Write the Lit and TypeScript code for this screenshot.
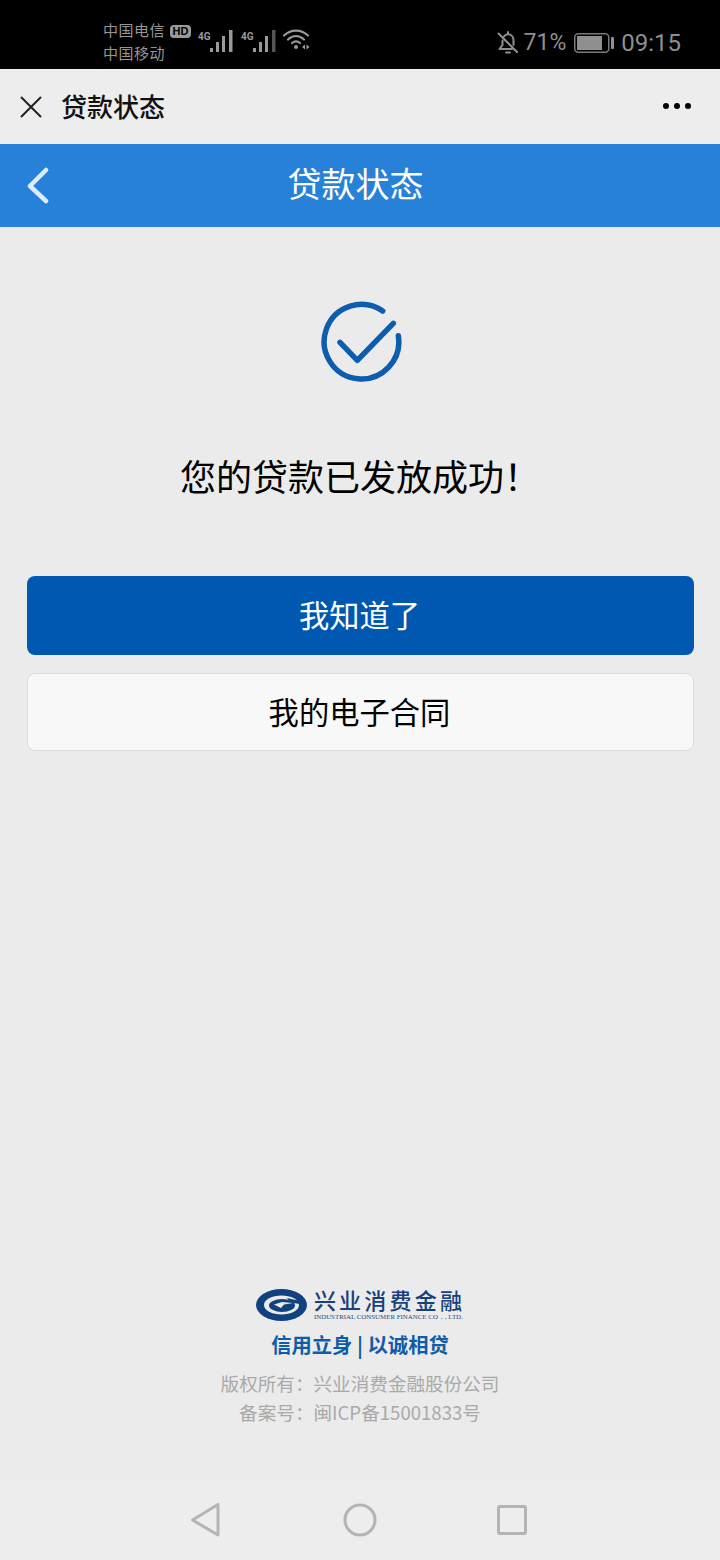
import { LitElement, html, css } from "lit";
import { customElement } from "lit/decorators.js";

const bars = (last: string) => html`<svg width="24" height="24" viewBox="0 0 24 24">
  <rect x="0" y="19" width="3" height="4" fill="#9a9a9a"/>
  <rect x="6" y="13" width="3" height="10" fill="#9a9a9a"/>
  <rect x="12" y="7" width="3" height="16" fill="#9a9a9a"/>
  <rect x="19" y="1" width="3.500" height="22" fill="${last}"/>
</svg>`;

@customElement("app-root")
export class AppRoot extends LitElement {
  static styles = css`
    :host { display: block; width: 720px; height: 1560px; font-family: "Liberation Sans", "Noto Sans CJK SC", sans-serif; }
    .page { height: 1560px; display: flex; flex-direction: column; background: #ebebeb; }
    .status { height: 69px; flex: none; background: #000; color: #969696; display: flex; align-items: center; padding: 12px 39px 0 103px; box-sizing: border-box; }
    .carrier { display: flex; flex-direction: column; font-size: 15px; line-height: 23px; width: 67px; padding-top: 1px; font-family: "Noto Sans CJK SC", sans-serif; letter-spacing: 0.5px; }
    .hd { width: 21px; height: 13px; border-radius: 4px; background: #9a9a9a; color: #000; font: bold 11px/13px "Liberation Sans", sans-serif; text-align: center; margin: -18px 7px 0 0; }
    .net { display: flex; align-items: flex-end; height: 26px; margin-right: 7px; margin-top: -2px; }
    .net b { font: bold 10px/10px "Roboto", sans-serif; color: #9a9a9a; align-self: flex-start; margin: 5px 1px 0 0; width: 11px; }
    .wifi { margin-left: -2px; margin-top: -2px; }
    .spacer { flex: 1; }
    .right { display: flex; align-items: center; font: 24px/28px "Roboto", sans-serif; color: #8f8f8f; margin-top: 4px; }
    .pct { margin: 0 8px 0 5px; font-size: 23px; }
    .batt { margin-right: 7px; }

    .nav { height: 75px; flex: none; background: #ededed; display: flex; align-items: center; padding: 0 29px 0 20px; box-sizing: border-box; }
    .nav .t { margin-left: 19px; font: 500 26px/30px "Noto Sans CJK SC", sans-serif; color: #111; flex: 1; padding-bottom: 2px; }
    .dots { display: flex; gap: 5px; padding-bottom: 1px; }
    .dots i { width: 6px; height: 6px; border-radius: 50%; background: #000; }

    .head { height: 83px; flex: none; background: #2781d8; position: relative; display: flex; align-items: center; justify-content: center; color: #fff; font: 34px/40px "Noto Sans CJK SC", sans-serif; padding: 0 9px 6px 0; box-sizing: border-box; }
    .back { position: absolute; left: 26px; top: 23px; }

    .main { flex: 1; display: flex; flex-direction: column; align-items: center; }
    .ok { margin: 73px 0 0 2px; }
    .msg { margin-top: 68px; font: 36px/50px "Noto Sans CJK SC", sans-serif; color: #000; }
    .btns { margin-top: 76px; align-self: stretch; padding: 0 26px 0 27px; display: flex; flex-direction: column; gap: 18px; }
    .btn { border-radius: 8px; display: flex; align-items: center; justify-content: center; font: 30.300px/40px "Noto Sans CJK SC", sans-serif; box-sizing: border-box; padding: 0 2px 3px 0; }
    .primary { background: #0058b0; color: #fff; height: 79px; }
    .second { background: #f8f8f8; color: #000; border: 1px solid #dcdcdc; height: 78px; }

    .spring { flex: 1; }
    .foot { display: flex; flex-direction: column; align-items: center; padding-bottom: 54px; }
    .logo { display: flex; align-items: center; gap: 7px; margin-left: 1px; }
    .lt { display: flex; flex-direction: column; gap: 3px; }
    .cn { font: 500 22px/22px "Noto Sans CJK SC", sans-serif; letter-spacing: 3.200px; color: #16407f; white-space: nowrap; }
    .en { font: 6.900px/8px "Liberation Serif", serif; color: #2a4a80; white-space: nowrap; }
    .slogan { margin-top: 8px; font: 700 20.300px/30px "Noto Sans CJK SC", sans-serif; color: #0f5ca8; }
    .copy { margin-top: 9px; font: 18.600px/29px "Noto Sans CJK SC", sans-serif; color: #a9a9a9; }
    .copy.two { margin-top: 0; }

    .sys { height: 80px; flex: none; background: #ededed; display: flex; align-items: center; padding-left: 190px; gap: 121px; }
    .sys svg:last-child { margin-left: -1px; }
  `;

  render() {
    return html`<div class="page">
      <div class="status">
        <div class="carrier"><span>中国电信</span><span>中国移动</span></div>
        <div class="hd">HD</div>
        <div class="net"><b>4G</b>${bars("#9a9a9a")}</div>
        <div class="net"><b>4G</b>${bars("#555")}</div>
        <svg class="wifi" width="30" height="24" viewBox="0 0 30 24" fill="none" stroke="#9a9a9a" stroke-width="2.200" stroke-linecap="round">
          <path d="M2 7.500C9 1 19 1 26 7.500"/>
          <path d="M6 11.500C11 7 17 7 22 11.500"/>
          <path d="M10 15C12.500 13 15.500 13 18 15"/>
          <circle cx="14" cy="19" r="2" fill="#9a9a9a" stroke="none"/>
          <path d="M20 19l3-2.500v5zM24.500 16.500v5l3-2.500z" fill="#9a9a9a" stroke="none"/>
        </svg>
        <div class="spacer"></div>
        <div class="right">
          <svg width="22" height="24" viewBox="0 0 22 24" fill="none" stroke="#8f8f8f" stroke-width="2" stroke-linecap="round" stroke-linejoin="round">
            <path d="M1.500 2.500L20 21"/>
            <path d="M5.500 9.500V14L2.500 18H15"/>
            <path d="M7 5.500C8 4 9.500 3.300 11 3.300C14.500 3.300 16.500 6 16.500 9.500V14"/>
            <path d="M9 21.500H13" />
            <path d="M11 1v2"/>
          </svg>
          <span class="pct">71%</span>
          <svg class="batt" width="40" height="20" viewBox="0 0 40 20">
            <rect x="0.750" y="0.750" width="34" height="18.500" rx="3.500" fill="none" stroke="#7a7a7a" stroke-width="1.500"/>
            <rect x="3" y="3" width="25" height="14" fill="#8f8f8f"/>
            <rect x="37" y="4" width="3" height="12" rx="1" fill="#8f8f8f"/>
          </svg>
          <span>09:15</span>
        </div>
      </div>

      <div class="nav">
        <svg width="22" height="22" viewBox="0 0 22 22" stroke="#222" stroke-width="2" fill="none"><path d="M1 1L21 21M21 1L1 21"/></svg>
        <div class="t">贷款状态</div>
        <div class="dots"><i></i><i></i><i></i></div>
      </div>

      <div class="head">
        <svg class="back" width="26" height="38" viewBox="0 0 26 38" fill="none" stroke="#dcebfa" stroke-width="4.500" stroke-linecap="round" stroke-linejoin="round"><path d="M20 3L4 19L20 34"/></svg>
        贷款状态
      </div>

      <div class="main">
        <svg class="ok" width="82" height="82" viewBox="0 0 82 82" fill="none" stroke="#0d5cae" stroke-width="5.500" stroke-linecap="round" stroke-linejoin="round">
          <path d="M62.700 11A37.300 37.300 0 1 0 78.300 35.700"/>
          <path d="M20 42.300L37.300 60.300L73.300 23.300"/>
        </svg>
        <div class="msg">您的贷款已发放成功！</div>
        <div class="btns">
          <div class="btn primary">我知道了</div>
          <div class="btn second">我的电子合同</div>
        </div>
        <div class="spring"></div>
        <div class="foot">
          <div class="logo">
            <svg width="51" height="32" viewBox="0 0 51 32">
              <ellipse cx="25.500" cy="16" rx="25.500" ry="16" fill="#12417f"/>
              <ellipse cx="25.500" cy="16" rx="17.500" ry="9.500" fill="#ebebeb"/>
              <ellipse cx="26" cy="16.500" rx="13" ry="6.500" fill="#12417f"/>
              <path d="M31 9L44 12L44 15L34 13.500Z" fill="#12417f"/>
              <path d="M18 15.500L26 13L37 14L28 15.500L25 19Z" fill="#ebebeb"/>
            </svg>
            <div class="lt">
              <div class="cn">兴业消费金融</div>
              <div class="en">INDUSTRIAL CONSUMER FINANCE CO．, LTD.</div>
            </div>
          </div>
          <div class="slogan">信用立身 | 以诚相贷</div>
          <div class="copy">版权所有：兴业消费金融股份公司</div>
          <div class="copy two">备案号：闽ICP备15001833号</div>
        </div>
      </div>

      <div class="sys">
        <svg width="32" height="36" viewBox="0 0 32 36" fill="none" stroke="#b4b4b4" stroke-width="3" stroke-linejoin="round"><path d="M28 2.500V33L2.500 18Z"/></svg>
        <svg width="34" height="34" viewBox="0 0 34 34" fill="none" stroke="#b4b4b4" stroke-width="3"><circle cx="17" cy="17" r="15"/></svg>
        <svg width="30" height="30" viewBox="0 0 30 30" fill="none" stroke="#b4b4b4" stroke-width="3" stroke-linejoin="round"><rect x="1.500" y="1.500" width="27" height="27" rx="1.500"/></svg>
      </div>
    </div>`;
  }
}
